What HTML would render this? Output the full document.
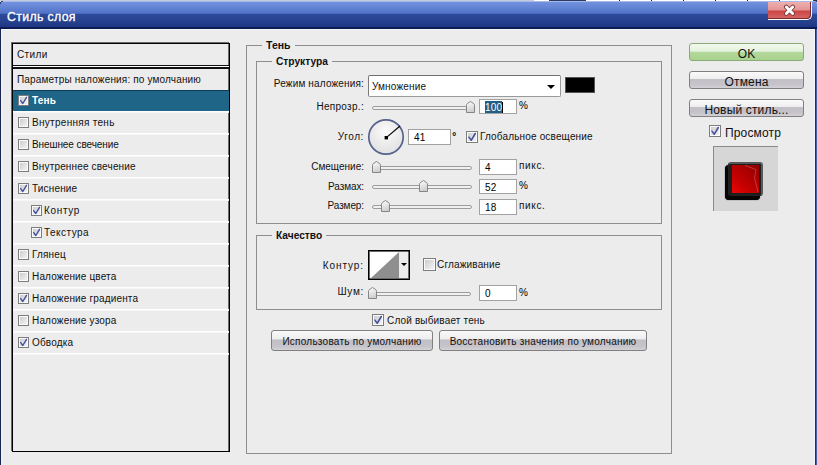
<!DOCTYPE html>
<html><head><meta charset="utf-8">
<style>
*{margin:0;padding:0;box-sizing:border-box}
html,body{width:817px;height:465px;overflow:hidden;background:#ececec;font-family:"Liberation Sans",sans-serif;color:#000}
.a{position:absolute}
.t{position:absolute;white-space:nowrap;font-size:10px;line-height:12px;letter-spacing:0.16px;color:#111}
.b{font-weight:bold}
.grp{position:absolute;border:1px solid #8e8e8e}
.lbl{position:absolute;background:#ececec;padding:0 4px;font-weight:bold;font-size:10.2px;line-height:12px;white-space:nowrap;color:#111}
.trk{position:absolute;height:4px;border:1px solid #9c9c9c;border-radius:2px;background:#f0f0f0}
.btn{position:absolute;border:1px solid #808080;border-radius:3px;background:linear-gradient(#fafafa 0,#eeeeee 42%,#c2bfc7 47%,#c6c4ca 80%,#d2d1d5 100%)}
</style></head><body>
<svg width="0" height="0" style="position:absolute"><defs>
<linearGradient id="cg" x1="0" y1="0" x2="1" y2="1"><stop offset="0" stop-color="#cdcdcd"/><stop offset="1" stop-color="#f3f3f3"/></linearGradient>
<linearGradient id="tg" x1="0" y1="0" x2="0.3" y2="1"><stop offset="0" stop-color="#ffffff"/><stop offset="1" stop-color="#cfcfcf"/></linearGradient>
</defs></svg>
<div class="a" style="left:0px;top:0px;width:817px;height:1px;background:#c3cbe2"></div>
<div class="a" style="left:534px;top:0px;width:15px;height:1px;background:#fff"></div>
<div class="a" style="left:549px;top:0px;width:37px;height:1px;background:#2c3a66"></div>
<div class="a" style="left:586px;top:0px;width:228px;height:1px;background:#fff"></div>
<div class="a" style="left:619px;top:0px;width:1px;height:1px;background:#222"></div>
<div class="a" style="left:651px;top:0px;width:1px;height:1px;background:#222"></div>
<div class="a" style="left:683px;top:0px;width:1px;height:1px;background:#222"></div>
<div class="a" style="left:715px;top:0px;width:1px;height:1px;background:#222"></div>
<div class="a" style="left:747px;top:0px;width:1px;height:1px;background:#222"></div>
<div class="a" style="left:779px;top:0px;width:1px;height:1px;background:#222"></div>
<div class="a" style="left:813px;top:0px;width:4px;height:2px;background:#2a3450"></div>
<div class="a" style="left:0px;top:1px;width:817px;height:28px;background:linear-gradient(#a8b8e4 0px,#a8b8e4 1px,#7191e1 1px,#6a8ad9 4px,#5373c8 12px,#4666bb 12.6px,#2d4a9b 13px,#26428f 20px,#1e3683 26px,#0e1c58 26.5px,#0c1a50 28px);border-radius:3px 3px 0 0"></div>
<div class="a" style="left:1px;top:1px;width:2px;height:1px;background:#34467e"></div>
<div class="a" style="left:0px;top:2px;width:1px;height:2px;background:#2a3a78"></div>
<div class="t" style="left:7px;top:10px;font-size:12.3px;line-height:14px;color:#fff;letter-spacing:0.35px;-webkit-text-stroke:0.35px #fff">Стиль слоя</div>
<div class="a" style="left:768px;top:2px;width:44px;height:18px;border-radius:0 0 5px 0;border-right:1px solid #fff;border-bottom:1px solid #fff;box-shadow:inset -1px -1px 0 #7a2a2a;background:linear-gradient(#eeb0b0 0,#e49494 48%,#cc4444 52%,#d86a6a 100%)"></div>
<svg class="a" style="left:783px;top:4px" width="13" height="12"><path d="M3.3 3L9.7 9.5M9.7 3L3.3 9.5" stroke="#7a3c3c" stroke-width="4.6" stroke-linecap="round"/><path d="M3.3 3L9.7 9.5M9.7 3L3.3 9.5" stroke="#fff" stroke-width="2.8" stroke-linecap="round"/></svg>
<div class="a" style="left:0px;top:29px;width:1px;height:436px;background:#1a2452"></div>
<div class="a" style="left:1px;top:29px;width:1px;height:436px;background:#eef3fe"></div>
<div class="a" style="left:1px;top:29px;width:814px;height:1px;background:#f6f6f6"></div>
<div class="a" style="left:815px;top:29px;width:2px;height:436px;background:#1f2f68;box-shadow:inset -1px 0 0 #4b5fa2"></div>
<div class="a" style="left:814px;top:29px;width:1px;height:436px;background:#eef2fc"></div>
<div class="a" style="left:12px;top:43px;width:218px;height:409px;border:1px solid #000;box-shadow:-1px -1px 0 rgba(0,0,0,.55), inset -1px 0 0 rgba(0,0,0,.55);background:#ececec"></div>
<div class="a" style="left:13px;top:65px;width:216px;height:1px;background:#111"></div>
<div class="a" style="left:13px;top:66px;width:216px;height:1px;background:#fff"></div>
<div class="a" style="left:13px;top:67px;width:216px;height:2px;background:#111"></div>
<div class="t" style="left:17px;top:49px;letter-spacing:0.4px">Стили</div>
<div class="t" style="left:17px;top:74px;">Параметры наложения: по умолчанию</div>
<div class="a" style="left:13px;top:90px;width:216px;height:21px;background:#1f6587;border-top:1px solid #0e3c55"></div>
<div class="a" style="left:13px;top:111px;width:216px;height:2px;background:linear-gradient(#fff 50%,#f6f6f6 50%)"></div>
<svg class="a" style="left:18px;top:95px" width="11" height="11"><rect x="0.5" y="0.5" width="10" height="10" fill="#fbfbfb" stroke="#7d7d7d"/><rect x="2" y="2" width="7" height="7" fill="url(#cg)"/><path d="M2.70 5.60L4.80 8.50L8.50 2.30" stroke="#4853a0" stroke-width="1.45" fill="none" stroke-linecap="round" stroke-linejoin="round"/></svg>
<div class="t b" style="left:32px;top:95px;color:#fff">Тень</div>
<div class="a" style="left:13px;top:133px;width:216px;height:2px;background:linear-gradient(#fff 50%,#f6f6f6 50%)"></div>
<svg class="a" style="left:18px;top:117px" width="11" height="11"><rect x="0.5" y="0.5" width="10" height="10" fill="#fbfbfb" stroke="#7d7d7d"/><rect x="2" y="2" width="7" height="7" fill="url(#cg)"/></svg>
<div class="t" style="left:32px;top:117px;letter-spacing:0.29px">Внутренняя тень</div>
<div class="a" style="left:13px;top:155px;width:216px;height:2px;background:linear-gradient(#fff 50%,#f6f6f6 50%)"></div>
<svg class="a" style="left:18px;top:139px" width="11" height="11"><rect x="0.5" y="0.5" width="10" height="10" fill="#fbfbfb" stroke="#7d7d7d"/><rect x="2" y="2" width="7" height="7" fill="url(#cg)"/></svg>
<div class="t" style="left:32px;top:139px;letter-spacing:-0.09px">Внешнее свечение</div>
<div class="a" style="left:13px;top:177px;width:216px;height:2px;background:linear-gradient(#fff 50%,#f6f6f6 50%)"></div>
<svg class="a" style="left:18px;top:161px" width="11" height="11"><rect x="0.5" y="0.5" width="10" height="10" fill="#fbfbfb" stroke="#7d7d7d"/><rect x="2" y="2" width="7" height="7" fill="url(#cg)"/></svg>
<div class="t" style="left:32px;top:161px;">Внутреннее свечение</div>
<div class="a" style="left:13px;top:199px;width:216px;height:2px;background:linear-gradient(#fff 50%,#f6f6f6 50%)"></div>
<svg class="a" style="left:18px;top:183px" width="11" height="11"><rect x="0.5" y="0.5" width="10" height="10" fill="#fbfbfb" stroke="#7d7d7d"/><rect x="2" y="2" width="7" height="7" fill="url(#cg)"/><path d="M2.70 5.60L4.80 8.50L8.50 2.30" stroke="#4853a0" stroke-width="1.45" fill="none" stroke-linecap="round" stroke-linejoin="round"/></svg>
<div class="t" style="left:32px;top:183px;">Тиснение</div>
<div class="a" style="left:13px;top:221px;width:216px;height:2px;background:linear-gradient(#fff 50%,#f6f6f6 50%)"></div>
<svg class="a" style="left:31px;top:205px" width="11" height="11"><rect x="0.5" y="0.5" width="10" height="10" fill="#fbfbfb" stroke="#7d7d7d"/><rect x="2" y="2" width="7" height="7" fill="url(#cg)"/><path d="M2.70 5.60L4.80 8.50L8.50 2.30" stroke="#4853a0" stroke-width="1.45" fill="none" stroke-linecap="round" stroke-linejoin="round"/></svg>
<div class="t" style="left:44px;top:205px;letter-spacing:0.66px">Контур</div>
<div class="a" style="left:13px;top:243px;width:216px;height:2px;background:linear-gradient(#fff 50%,#f6f6f6 50%)"></div>
<svg class="a" style="left:31px;top:227px" width="11" height="11"><rect x="0.5" y="0.5" width="10" height="10" fill="#fbfbfb" stroke="#7d7d7d"/><rect x="2" y="2" width="7" height="7" fill="url(#cg)"/><path d="M2.70 5.60L4.80 8.50L8.50 2.30" stroke="#4853a0" stroke-width="1.45" fill="none" stroke-linecap="round" stroke-linejoin="round"/></svg>
<div class="t" style="left:44px;top:227px;letter-spacing:0.47px">Текстура</div>
<div class="a" style="left:13px;top:265px;width:216px;height:2px;background:linear-gradient(#fff 50%,#f6f6f6 50%)"></div>
<svg class="a" style="left:18px;top:249px" width="11" height="11"><rect x="0.5" y="0.5" width="10" height="10" fill="#fbfbfb" stroke="#7d7d7d"/><rect x="2" y="2" width="7" height="7" fill="url(#cg)"/></svg>
<div class="t" style="left:32px;top:249px;">Глянец</div>
<div class="a" style="left:13px;top:287px;width:216px;height:2px;background:linear-gradient(#fff 50%,#f6f6f6 50%)"></div>
<svg class="a" style="left:18px;top:271px" width="11" height="11"><rect x="0.5" y="0.5" width="10" height="10" fill="#fbfbfb" stroke="#7d7d7d"/><rect x="2" y="2" width="7" height="7" fill="url(#cg)"/></svg>
<div class="t" style="left:32px;top:271px;">Наложение цвета</div>
<div class="a" style="left:13px;top:309px;width:216px;height:2px;background:linear-gradient(#fff 50%,#f6f6f6 50%)"></div>
<svg class="a" style="left:18px;top:293px" width="11" height="11"><rect x="0.5" y="0.5" width="10" height="10" fill="#fbfbfb" stroke="#7d7d7d"/><rect x="2" y="2" width="7" height="7" fill="url(#cg)"/><path d="M2.70 5.60L4.80 8.50L8.50 2.30" stroke="#4853a0" stroke-width="1.45" fill="none" stroke-linecap="round" stroke-linejoin="round"/></svg>
<div class="t" style="left:32px;top:293px;">Наложение градиента</div>
<div class="a" style="left:13px;top:331px;width:216px;height:2px;background:linear-gradient(#fff 50%,#f6f6f6 50%)"></div>
<svg class="a" style="left:18px;top:315px" width="11" height="11"><rect x="0.5" y="0.5" width="10" height="10" fill="#fbfbfb" stroke="#7d7d7d"/><rect x="2" y="2" width="7" height="7" fill="url(#cg)"/></svg>
<div class="t" style="left:32px;top:315px;">Наложение узора</div>
<div class="a" style="left:13px;top:353px;width:216px;height:2px;background:linear-gradient(#fff 50%,#f6f6f6 50%)"></div>
<svg class="a" style="left:18px;top:337px" width="11" height="11"><rect x="0.5" y="0.5" width="10" height="10" fill="#fbfbfb" stroke="#7d7d7d"/><rect x="2" y="2" width="7" height="7" fill="url(#cg)"/><path d="M2.70 5.60L4.80 8.50L8.50 2.30" stroke="#4853a0" stroke-width="1.45" fill="none" stroke-linecap="round" stroke-linejoin="round"/></svg>
<div class="t" style="left:32px;top:337px;">Обводка</div>
<div class="grp" style="left:246px;top:45px;width:426px;height:409px"></div>
<div class="lbl" style="left:262px;top:39px;font-size:10.5px">Тень</div>
<div class="grp" style="left:256px;top:61px;width:406px;height:163px"></div>
<div class="lbl" style="left:272px;top:56px;font-size:10.2px">Структура</div>
<div class="t" style="right:453px;top:78px;">Режим наложения:</div>
<div class="a" style="left:368px;top:75px;width:193px;height:22px;background:#fff;border:1px solid #9a9a9a;border-top-color:#6f6f6f;border-left-color:#7a7a7a;border-radius:2px"></div>
<div class="t" style="left:372px;top:81px;">Умножение</div>
<div class="a" style="left:547px;top:85px;width:0px;height:0px;border-left:4px solid transparent;border-right:4px solid transparent;border-top:4px solid #000"></div>
<div class="a" style="left:565px;top:77px;width:30px;height:16px;background:#000;border:1px solid #555"></div>
<div class="t" style="right:453px;top:101px;letter-spacing:0.3px">Непрозр.:</div>
<div class="trk" style="left:372px;top:106px;width:100px"></div>
<svg class="a" style="left:466px;top:101px" width="9" height="12"><path d="M0.5 11.5V4.2Q0.5 3.4 1.3 2.6L4.5 0.5L7.7 2.6Q8.5 3.4 8.5 4.2V11.5Z" fill="url(#tg)" stroke="#858585"/></svg>
<div class="a" style="left:479px;top:99px;width:38px;height:15px;background:#fff;border:1px solid #a2a2a2"></div>
<div class="t" style="left:485px;top:102px;font-size:10px;color:#000;"><span style="background:#1f5f87;color:#fff;padding:1px 0 0">100</span><span style="display:inline-block;width:1px;height:11px;background:#000;vertical-align:-2px"></span></div>
<div class="t" style="left:519px;top:100px;font-size:10px;color:#000">%</div>
<div class="t" style="right:453px;top:131px;letter-spacing:0.6px">Угол:</div>
<svg class="a" style="left:366px;top:117px" width="40" height="40"><defs><radialGradient id="ag" cx="0.5" cy="0.35" r="0.6"><stop offset="0" stop-color="#fbfbfb"/><stop offset="1" stop-color="#e2e2e2"/></radialGradient></defs><circle cx="20" cy="20" r="17.2" fill="url(#ag)" stroke="#56628e" stroke-width="1.7"/><line x1="20.3" y1="20.6" x2="34" y2="9" stroke="#000" stroke-width="1.1"/><rect x="18.6" y="19" width="3.4" height="3.4" fill="#000"/></svg>
<div class="a" style="left:408px;top:129px;width:43px;height:16px;background:#fff;border:1px solid #a2a2a2"></div>
<div class="t" style="left:414px;top:132px;font-size:10px;color:#000;">41</div>
<div class="t" style="left:452px;top:130px;font-size:11px;color:#000;-webkit-text-stroke:0.2px #000">°</div>
<svg class="a" style="left:466px;top:131px" width="12" height="12"><rect x="0.5" y="0.5" width="11" height="11" fill="#fbfbfb" stroke="#7d7d7d"/><rect x="2" y="2" width="8" height="8" fill="url(#cg)"/><path d="M2.95 6.11L5.24 9.27L9.27 2.51" stroke="#4853a0" stroke-width="1.58" fill="none" stroke-linecap="round" stroke-linejoin="round"/></svg>
<div class="t" style="left:480px;top:131px;">Глобальное освещение</div>
<div class="t" style="right:453px;top:161px;letter-spacing:0px">Смещение:</div>
<div class="trk" style="left:372px;top:166px;width:100px"></div>
<svg class="a" style="left:372px;top:161px" width="9" height="12"><path d="M0.5 11.5V4.2Q0.5 3.4 1.3 2.6L4.5 0.5L7.7 2.6Q8.5 3.4 8.5 4.2V11.5Z" fill="url(#tg)" stroke="#858585"/></svg>
<div class="a" style="left:479px;top:159px;width:38px;height:16px;background:#fff;border:1px solid #a2a2a2"></div>
<div class="t" style="left:485px;top:162px;font-size:10px;color:#000;">4</div>
<div class="t" style="left:519px;top:160px;letter-spacing:0.65px">пикс.</div>
<div class="t" style="right:453px;top:181px;letter-spacing:-0.1px">Размах:</div>
<div class="trk" style="left:372px;top:185px;width:100px"></div>
<svg class="a" style="left:419px;top:180px" width="9" height="12"><path d="M0.5 11.5V4.2Q0.5 3.4 1.3 2.6L4.5 0.5L7.7 2.6Q8.5 3.4 8.5 4.2V11.5Z" fill="url(#tg)" stroke="#858585"/></svg>
<div class="a" style="left:479px;top:179px;width:38px;height:15px;background:#fff;border:1px solid #a2a2a2"></div>
<div class="t" style="left:485px;top:182px;font-size:10px;color:#000;">52</div>
<div class="t" style="left:519px;top:180px;font-size:10px;color:#000">%</div>
<div class="t" style="right:453px;top:200px;letter-spacing:-0.1px">Размер:</div>
<div class="trk" style="left:372px;top:205px;width:100px"></div>
<svg class="a" style="left:381px;top:200px" width="9" height="12"><path d="M0.5 11.5V4.2Q0.5 3.4 1.3 2.6L4.5 0.5L7.7 2.6Q8.5 3.4 8.5 4.2V11.5Z" fill="url(#tg)" stroke="#858585"/></svg>
<div class="a" style="left:479px;top:199px;width:38px;height:16px;background:#fff;border:1px solid #a2a2a2"></div>
<div class="t" style="left:485px;top:202px;font-size:10px;color:#000;">18</div>
<div class="t" style="left:519px;top:200px;letter-spacing:0.65px">пикс.</div>
<div class="grp" style="left:256px;top:235px;width:406px;height:75px"></div>
<div class="lbl" style="left:272px;top:230px;font-size:10.2px">Качество</div>
<div class="t" style="right:453px;top:260px;letter-spacing:0.9px">Контур:</div>
<div class="a" style="left:368px;top:250px;width:42px;height:30px;border:1px solid #000;box-shadow:inset 1px 1px 0 rgba(0,0,0,.55),inset -1px -1px 0 rgba(0,0,0,.55);background:#ececec"></div>
<div class="a" style="left:370px;top:252px;width:29px;height:26px;background:#fff"></div>
<svg class="a" style="left:370px;top:252px" width="29" height="26"><polygon points="29,0 29,26 1,26" fill="#8f8f8f"/></svg>
<div class="a" style="left:401px;top:263px;width:0px;height:0px;border-left:3px solid transparent;border-right:3px solid transparent;border-top:3px solid #000"></div>
<svg class="a" style="left:423px;top:258px" width="13" height="13"><rect x="0.5" y="0.5" width="12" height="12" fill="#fbfbfb" stroke="#7d7d7d"/><rect x="2" y="2" width="9" height="9" fill="url(#cg)"/></svg>
<div class="t" style="left:437px;top:259px;">Сглаживание</div>
<div class="t" style="right:453px;top:286px;letter-spacing:0.7px">Шум:</div>
<div class="trk" style="left:369px;top:292px;width:102px"></div>
<svg class="a" style="left:368px;top:287px" width="9" height="12"><path d="M0.5 11.5V4.2Q0.5 3.4 1.3 2.6L4.5 0.5L7.7 2.6Q8.5 3.4 8.5 4.2V11.5Z" fill="url(#tg)" stroke="#858585"/></svg>
<div class="a" style="left:479px;top:285px;width:38px;height:16px;background:#fff;border:1px solid #a2a2a2"></div>
<div class="t" style="left:485px;top:288px;font-size:10px;color:#000;">0</div>
<div class="t" style="left:519px;top:287px;font-size:10px;color:#000">%</div>
<svg class="a" style="left:372px;top:314px" width="12" height="12"><rect x="0.5" y="0.5" width="11" height="11" fill="#fbfbfb" stroke="#7d7d7d"/><rect x="2" y="2" width="8" height="8" fill="url(#cg)"/><path d="M2.95 6.11L5.24 9.27L9.27 2.51" stroke="#4853a0" stroke-width="1.58" fill="none" stroke-linecap="round" stroke-linejoin="round"/></svg>
<div class="t" style="left:387px;top:315px;">Слой выбивает тень</div>
<div class="btn" style="left:271px;top:330px;width:162px;height:21px;"></div>
<div class="t" style="left:271px;top:331px;width:162px;height:21px;line-height:21px;text-align:center;font-size:10px;letter-spacing:0.25px">Использовать по умолчанию</div>
<div class="btn" style="left:439px;top:330px;width:208px;height:21px;"></div>
<div class="t" style="left:439px;top:331px;width:208px;height:21px;line-height:21px;text-align:center;font-size:10px;letter-spacing:0.25px">Восстановить значения по умолчанию</div>
<div class="btn" style="left:689px;top:43px;width:115px;height:18px;border-color:#8aaa7a;background:linear-gradient(#f2f9ee 0,#e4f2dc 45%,#b4d89c 52%,#a8d28c 100%)"></div>
<div class="t" style="left:689px;top:45px;width:115px;height:18px;line-height:18px;text-align:center;font-size:12px;">OK</div>
<div class="btn" style="left:689px;top:71px;width:115px;height:18px;"></div>
<div class="t" style="left:689px;top:73px;width:115px;height:18px;line-height:18px;text-align:center;font-size:12px;">Отмена</div>
<div class="btn" style="left:689px;top:99px;width:115px;height:18px;"></div>
<div class="t" style="left:689px;top:101px;width:115px;height:18px;line-height:18px;text-align:center;font-size:12px;">Новый стиль...</div>
<svg class="a" style="left:709px;top:125px" width="12" height="12"><rect x="0.5" y="0.5" width="11" height="11" fill="#fbfbfb" stroke="#7d7d7d"/><rect x="2" y="2" width="8" height="8" fill="url(#cg)"/><path d="M2.95 6.11L5.24 9.27L9.27 2.51" stroke="#4853a0" stroke-width="1.58" fill="none" stroke-linecap="round" stroke-linejoin="round"/></svg>
<div class="t" style="left:725px;top:126px;font-size:12px;line-height:14px">Просмотр</div>
<div class="a" style="left:713px;top:146px;width:65px;height:65px;background:#d6d6d6;border-left:1px solid #8a8a8a;border-top:1px solid #8a8a8a"></div>
<div class="a" style="left:725px;top:165px;width:35px;height:35px;background:#050505;border-radius:4px;box-shadow:0 0 1px #000"></div>
<div class="a" style="left:728px;top:162px;width:35px;height:34px;background:#1e1e1e;border-top:2px solid #555;border-right:2px solid #5a5a5a;border-left:1px solid #222;border-bottom:1px solid #222;border-radius:3px"></div>
<div class="a" style="left:732px;top:165px;width:27px;height:28px;background:linear-gradient(45deg,#ea0606 0,#c00000 40%,#900000 100%)"></div>
<svg class="a" style="left:732px;top:165px" width="27" height="28"><path d="M13 0.5L24 4.5L22.5 13L26 27" stroke="#e89090" stroke-width="0.7" fill="none" opacity="0.55"/></svg>
</body></html>
